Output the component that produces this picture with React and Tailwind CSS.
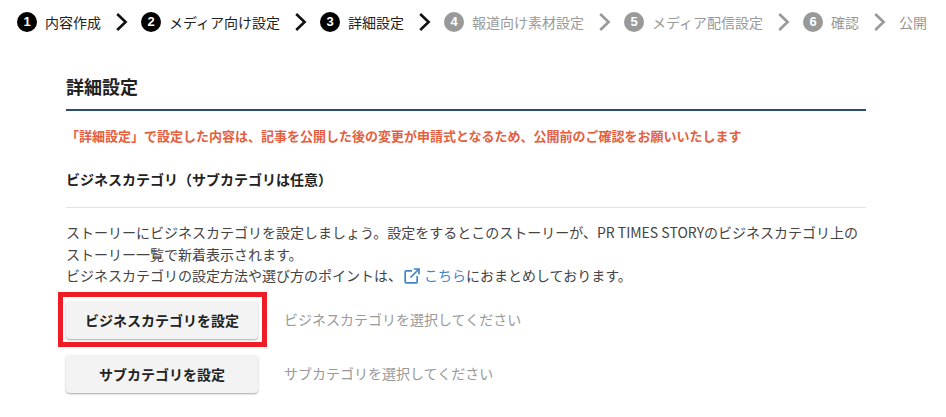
const F = '[font-family:"Noto_Sans_CJK_JP","Noto_Sans_JP",sans-serif]';

function Chevron({ active }) {
  return (
    <svg width="13" height="20" viewBox="0 0 13 20" className="shrink-0" fill="none" stroke={active ? "#111" : "#999"} strokeWidth="2.6">
      <path d="M2.2 2 L10.6 10 L2.2 18" />
    </svg>
  );
}

function Step({ n, label, active }) {
  return (
    <div className="flex items-center">
      {n && (
        <span className={`flex h-5 w-5 items-center justify-center rounded-full text-[13px] font-bold text-white [font-family:'Liberation_Sans',sans-serif] ${active ? "bg-black" : "bg-[#999]"}`}>
          {n}
        </span>
      )}
      <span className={`${n ? "ml-2" : ""} text-[14px] leading-5 ${active ? "text-[#222]" : "text-[#999]"}`}>{label}</span>
    </div>
  );
}

const steps = [
  { n: 1, label: "内容作成", active: true },
  { n: 2, label: "メディア向け設定", active: true },
  { n: 3, label: "詳細設定", active: true },
  { n: 4, label: "報道向け素材設定" },
  { n: 5, label: "メディア配信設定" },
  { n: 6, label: "確認" },
];

function Row({ label, hint, highlighted, className = "" }) {
  return (
    <div className={`flex items-center ${className}`}>
      <div className="relative">
        {highlighted && <div className="absolute -left-2 -right-[9px] -top-[9px] -bottom-2 border-[5px] border-[#ee1c25]" />}
        <button className="flex h-[38px] w-[192px] items-center justify-center rounded bg-[#f3f3f3] text-[14px] font-bold text-[#222] shadow-[0_1px_2px_rgba(0,0,0,0.35)]">
          {label}
        </button>
      </div>
      <span className="ml-[26px] -translate-y-px text-[14px] text-[#999]">{hint}</span>
    </div>
  );
}

export default function App() {
  return (
    <div className={`h-[417px] w-[946px] overflow-hidden bg-white ${F}`}>
      <nav className="flex h-11 items-center whitespace-nowrap pl-[17px]">
        {steps.map((s) => (
          <div key={s.n} className="flex items-center">
            <Step {...s} />
            <div className="mx-[13.5px]"><Chevron active={s.active} /></div>
          </div>
        ))}
        <Step label="公開" />
      </nav>

      <main className="mx-[66px] w-[800px] pt-[28px]">
        <h1 className="border-b-2 border-[#2c4a7c] pb-[9px] text-[18px] font-bold leading-[28px] text-[#222]">詳細設定</h1>
        <p className="mt-[15px] text-[13px] font-bold leading-5 text-[#e4603f]">「詳細設定」で設定した内容は、記事を公開した後の変更が申請式となるため、公開前のご確認をお願いいたします</p>
        <h2 className="mt-[23px] border-b border-[#e2e2e2] pb-[18px] text-[14px] font-bold leading-5 text-[#222]">ビジネスカテゴリ（サブカテゴリは任意）</h2>
        <div className="mt-[14px] text-[14px] leading-[21.5px] text-[#444]">
          <p>ストーリーにビジネスカテゴリを設定しましょう。設定をするとこのストーリーが、PR TIMES STORYのビジネスカテゴリ上の</p>
          <p>ストーリー一覧で新着表示されます。</p>
          <p className="flex items-center">
            ビジネスカテゴリの設定方法や選び方のポイントは、
            <a className="ml-[2px] flex items-center text-[#3f86c7]">
              <svg width="16" height="16" viewBox="0 0 16 16" fill="none" stroke="#3f86c7" strokeWidth="1.7" className="mr-[4px]">
                <path d="M8 2.8H2.2a1 1 0 0 0-1 1v10a1 1 0 0 0 1 1h10a1 1 0 0 0 1-1V8" />
                <path d="M6.5 9.5 15 1M9.8 1H15v5.2" />
              </svg>
              こちら
            </a>
            におまとめしております。
          </p>
        </div>
        <Row highlighted className="mt-[14.5px]" label="ビジネスカテゴリを設定" hint="ビジネスカテゴリを選択してください" />
        <Row className="mt-4" label="サブカテゴリを設定" hint="サブカテゴリを選択してください" />
      </main>
    </div>
  );
}
